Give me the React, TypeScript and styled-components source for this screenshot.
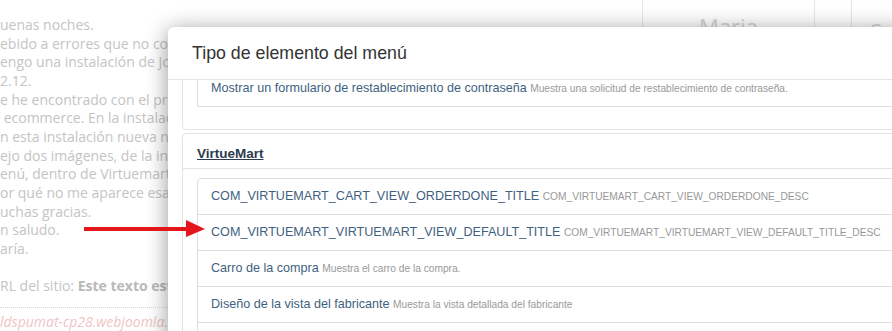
import React, { useLayoutEffect, useRef } from 'react';
import styled, { createGlobalStyle } from 'styled-components';

const GlobalStyle = createGlobalStyle`
    html, body {
        margin: 0;
        padding: 0;
        background: #ffffff;
        overflow: hidden;
    }
`;

type Item = { title: string; desc: string };

const userItems: Item[] = [
    { title: 'Formulario de acceso', desc: 'Muestra un formulario de acceso.' },
    { title: 'Mostrar un formulario de recordatorio', desc: 'Muestra una solicitud de recordatorio de usuario.' },
    { title: 'Mostrar un formulario de restablecimiento de contraseña', desc: 'Muestra una solicitud de restablecimiento de contraseña.' },
];

const vmItems: Item[] = [
    { title: 'COM_VIRTUEMART_CART_VIEW_ORDERDONE_TITLE', desc: 'COM_VIRTUEMART_CART_VIEW_ORDERDONE_DESC' },
    { title: 'COM_VIRTUEMART_VIRTUEMART_VIEW_DEFAULT_TITLE', desc: 'COM_VIRTUEMART_VIRTUEMART_VIEW_DEFAULT_TITLE_DESC' },
    { title: 'Carro de la compra', desc: 'Muestra el carro de la compra.' },
    { title: 'Diseño de la vista del fabricante', desc: 'Muestra la vista detallada del fabricante' },
    { title: 'Diseño de la vista de fabricantes', desc: 'Muestra la lista de fabricantes' },
    { title: 'Diseño de la vista de categoría', desc: 'Muestra los productos de una categoría' },
    { title: 'Diseño de la vista de producto', desc: 'Muestra la vista detallada de un producto' },
];

const postLines = [
    'uenas noches.',
    'ebido a errores que no consigo solucionar,',
    'engo una instalación de Joomla 3',
    '2.12.',
    'e he encontrado con el problema',
    '\u00a0ecommerce. En la instalación',
    'n esta instalación nueva no',
    'ejo dos imágenes, de la instalación',
    'enú, dentro de Virtuemart',
    'or qué no me aparece esa',
    'uchas gracias.',
    'n saludo.',
    'aría.',
];

const Panel: React.FC<{ title: string; items: Item[]; innerRef?: React.Ref<HTMLDivElement> }> = ({ title, items, innerRef }) => (
    <PanelBox ref={innerRef}>
        <PanelHeading>
            <PanelLink href="#">{title}</PanelLink>
        </PanelHeading>
        <PanelBody>
            <ListGroup>
                {items.map(item => (
                    <ListItem key={item.title}>
                        <ItemTitle>{item.title}</ItemTitle> <ItemDesc>{item.desc}</ItemDesc>
                    </ListItem>
                ))}
            </ListGroup>
        </PanelBody>
    </PanelBox>
);

export default function App() {
    const bodyRef = useRef<HTMLDivElement>(null);
    const vmRef = useRef<HTMLDivElement>(null);

    // the modal body is scrolled so that the VirtueMart panel sits just under the first one
    useLayoutEffect(() => {
        if (bodyRef.current && vmRef.current) {
            bodyRef.current.scrollTop = vmRef.current.offsetTop - 53;
        }
    }, []);

    return (
        <Page>
            <GlobalStyle />
            <Post>
                {postLines.map((line, i) => (
                    <Line key={i}>{line}</Line>
                ))}
                <SiteLine>
                    RL del sitio: <strong>Este texto está oculto</strong>
                </SiteLine>
                <Dotted />
                <SiteUrl>ldspumat-cp28.webjoomla.es</SiteUrl>
            </Post>
            <Tabs>
                <Tab $width={173}>Maria</Tab>
                <TabGap />
                <Tab $width={120} $low>Su</Tab>
            </Tabs>

            <Modal>
                <ModalHeader>
                    <ModalTitle>Tipo de elemento del menú</ModalTitle>
                </ModalHeader>
                <ModalBody ref={bodyRef}>
                    <Panel title="Usuarios" items={userItems} />
                    <Panel title="VirtueMart" items={vmItems} innerRef={vmRef} />
                </ModalBody>
            </Modal>

            <Arrow width="122" height="17" viewBox="0 0 122 17">
                <line x1="0" y1="9" x2="106" y2="9" stroke="#e3161b" strokeWidth="4" />
                <polygon points="102,0 121,9 102,17" fill="#e3161b" />
            </Arrow>
        </Page>
    );
}

const Page = styled.div`
    position: relative;
    width: 892px;
    height: 331px;
    overflow: hidden;
    display: flex;
    font-family: "Open Sans", sans-serif;
`;

const Post = styled.div`
    width: 642px;
    flex-shrink: 0;
    padding-top: 16px;
    box-sizing: border-box;
    font-size: 14px;
    line-height: 18.67px;
    color: #c4c4c4;
    white-space: nowrap;
`;

const Line = styled.div``;

const SiteLine = styled.div`
    margin-top: 18.67px;

    strong {
        font-weight: 700;
        color: #b9b9b9;
    }
`;

const Dotted = styled.div`
    width: 170px;
    margin-top: 11px;
    border-top: 1px dotted #d8d8d8;
`;

const SiteUrl = styled.div`
    margin-top: 5px;
    font-style: italic;
    color: #f0c4c4;
`;

const Tabs = styled.div`
    display: flex;
    align-items: flex-start;
`;

const Tab = styled.div<{ $width: number; $low?: boolean }>`
    width: ${p => p.$width}px;
    height: 60px;
    box-sizing: border-box;
    border-left: 1px solid #e6e6e6;
    border-right: 1px solid #e6e6e6;
    padding-top: ${p => (p.$low ? 20 : 15)}px;
    padding-left: ${p => (p.$low ? 18 : 0)}px;
    text-align: ${p => (p.$low ? 'left' : 'center')};
    font-size: 22px;
    line-height: 1;
    color: #d4d4d4;
`;

const TabGap = styled.div`
    width: 36px;
`;

const Modal = styled.div`
    position: absolute;
    left: 168px;
    top: 27px;
    width: 780px;
    height: 320px;
    background: #ffffff;
    border-radius: 6px;
    box-shadow: 0 3px 22px rgba(0, 0, 0, 0.42);
    display: flex;
    flex-direction: column;
    font-family: "Liberation Sans", Arial, sans-serif;
`;

const ModalHeader = styled.div`
    height: 52px;
    flex-shrink: 0;
    display: flex;
    align-items: center;
    padding: 0 24px;
    border-bottom: 1px solid #e5e5e5;
`;

const ModalTitle = styled.h3`
    margin: 0;
    font-size: 17.8px;
    font-weight: 400;
    color: #333333;
`;

const ModalBody = styled.div`
    position: relative;
    flex: 1;
    min-height: 0;
    overflow: hidden;
    padding: 15px 0 15px 14px;
`;

const PanelBox = styled.div`
    border: 1px solid #e3e3e3;
    border-radius: 4px;
    margin-bottom: 3px;
`;

const PanelHeading = styled.div`
    height: 35px;
    box-sizing: border-box;
    padding: 10px 14px 0;
    border-bottom: 1px solid #e3e3e3;
`;

const PanelLink = styled.a`
    font-size: 13.5px;
    font-weight: 700;
    line-height: 17px;
    color: #2c3b4e;
    text-decoration: underline;
`;

const PanelBody = styled.div`
    padding: 9px 0 23px 14px;
`;

const ListGroup = styled.div`
    display: flex;
    flex-direction: column;
`;

const ListItem = styled.div`
    height: 37px;
    box-sizing: border-box;
    padding: 8px 13px;
    font-size: 12.6px;
    line-height: 19px;
    border: 1px solid #dddddd;
    margin-bottom: -1px;
    white-space: nowrap;

    &:first-child {
        border-radius: 4px 0 0 0;
    }
`;

const ItemTitle = styled.span`
    font-size: 12.6px;
    color: #3f5f80;
`;

const ItemDesc = styled.small`
    font-size: 10.2px;
    color: #999999;
`;

const Arrow = styled.svg`
    position: absolute;
    left: 84px;
    top: 220px;
`;
